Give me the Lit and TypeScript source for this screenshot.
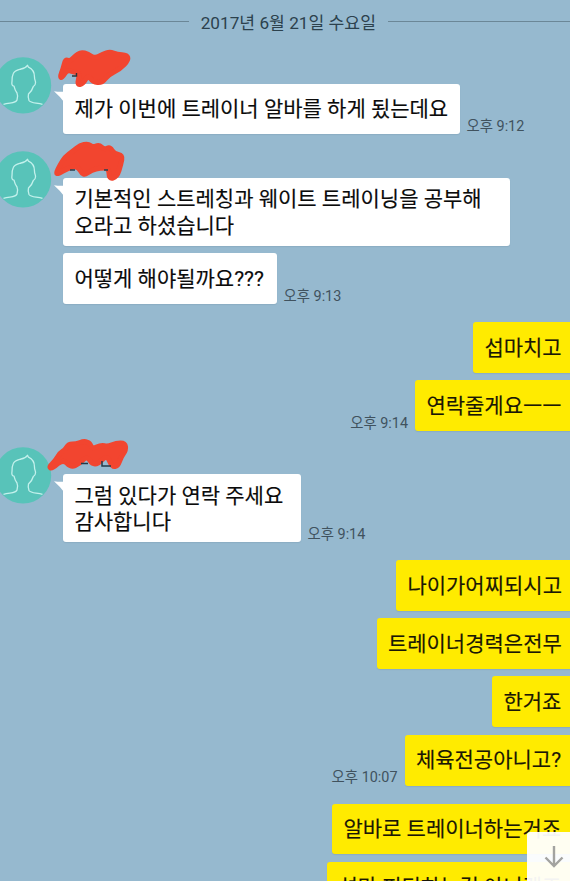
import { LitElement, html, svg, css } from "lit";
import { customElement, property } from "lit/decorators.js";

type Point = [number, number];

// Closed curve that runs through the midpoints of the outline's edges.
function smooth(points: Point[]): string {
  const mid = (a: Point, b: Point) => `${(a[0] + b[0]) / 2} ${(a[1] + b[1]) / 2}`;
  const last = points[points.length - 1];
  let d = `M${mid(last, points[0])}`;
  points.forEach((p, i) => {
    d += `Q${p[0]} ${p[1]} ${mid(p, points[(i + 1) % points.length])}`;
  });
  return d + "Z";
}

const SCRIBBLES: Point[][] = [
  [[60, 25], [63, 17], [65.5, 7], [70, 9.5], [75, 4], [81, 0], [88, 2], [95, 6.5], [103, 2], [110, -0.5], [117, 2.5], [127, 3], [128.5, 8], [120, 17], [108, 23], [102, 31], [93, 30], [88, 23], [83, 32], [77, 33], [80, 21], [73, 20], [67, 18], [62, 26]],
  [[56, 27], [60, 19], [65, 11], [73, 5], [80, -0.5], [88, -2.5], [93, 1.5], [99, -1.5], [104, 3.5], [110, 1], [114, 7.5], [122.5, 9.5], [121, 18], [117, 31], [109, 33], [109, 22], [100, 22], [92, 24], [83, 30], [78, 20], [68, 22], [58, 28]],
  [[49, 25], [55, 19], [60, 11], [65, 8], [68.5, 2], [76, 2], [84, -1], [90, 1], [92, 7], [101, 3], [108, 4.5], [116, 1], [125, 1], [126, 8], [121, 15], [118, 24], [112, 25], [107, 13], [98, 22], [92, 22], [87, 14], [79, 22], [71, 25.5], [63, 17], [52, 27]],
];

@customElement("contact-head")
class ContactHead extends LitElement {
  @property({ type: Number }) mark = 0;

  static styles = css`
    :host { display: block; position: absolute; left: 0; top: -32px; width: 140px; height: 70px; pointer-events: none; }
    svg { display: block; overflow: visible; }
    .ink { fill: #f2452f; stroke: #f2452f; stroke-width: 5; stroke-linejoin: round; }
  `;

  render() {
    const names = [
      svg`<path d="M72 24h4.500v-3" fill="none" stroke="#333" stroke-width="1.400"/>`,
      svg`<path d="M70 24h5M104 24h4" stroke="#274050" stroke-width="1.400"/>`,
      svg`<path d="M81 21.500h7M102 19v5h9" fill="none" stroke="#223a48" stroke-width="1.500"/>`,
    ];
    // Coordinates are relative to a point 32px above the first bubble.
    return html`<svg width="140" height="70" viewBox="0 0 140 70">
      <circle cx="23" cy="33.400" r="28.200" fill="#58c3b9"/>
      <path d="M3.500 52.300C10 50.500 16 51.500 17 48C17.800 45 18 43 17 41C15 38.500 14.500 36.500 14 34.200C12 34 11.500 32 12 29.500C12 26 12 24 13.300 21.500C15 18 18 17.800 21 17C24 16.500 26 15.500 27.500 13.300L28.500 15.200C32.500 17 34.500 21 34.500 25C34.300 28 36 29 35.500 31C35.300 33.500 34 34 33.300 34.500C32.500 38 30 40.500 28.500 42C28 44 28 46 29 48.500C31 51.500 37 50.500 42.500 52.300" fill="none" stroke="#c3f1ec" stroke-width="1.300" stroke-linejoin="round"/>
      <path d="M54 39.200Q59 40 64 39.700V50Q60 44.500 54 39.200Z" fill="#fff"/>
      <path d=${smooth(SCRIBBLES[this.mark])} class="ink"/>
      ${names[this.mark]}
    </svg>`;
  }
}

@customElement("chat-message")
class ChatMessage extends LitElement {
  @property({ type: Boolean, reflect: true }) mine = false;
  @property() time = "";
  @property({ attribute: false }) lines: string[] = [];
  @property({ type: Number }) wide = 0;

  static styles = css`
    :host { display: flex; align-items: flex-end; padding-left: 63px; gap: 6.500px; }
    :host([mine]) { flex-direction: row-reverse; padding-left: 0; gap: 7px; }
    .bubble {
      box-sizing: border-box; padding: 12.700px 11.400px 11.300px; border-radius: 3px; background: #fff;
      color: #0b0b0b; font-size: 21px; line-height: 27px; white-space: nowrap;
      -webkit-text-stroke: 0.150px currentColor;
      box-shadow: 0 1px 1px rgba(60, 90, 110, 0.12);
    }
    .bubble.two { padding: 8.300px 11.400px 6.200px; }
    .two .line { height: 26.800px; }
    :host([mine]) .bubble { background: #ffeb00; color: #1a1705; border-radius: 3px 0 0 3px; }
    .time { font-size: 14.400px; line-height: 17px; margin-bottom: -0.600px; color: #40525e; white-space: nowrap; }
  `;

  render() {
    const size = this.wide ? `width:${this.wide}px` : "";
    return html`
      <div class="bubble ${this.lines.length > 1 ? "two" : ""}" style=${size}>
        ${this.lines.map((l) => html`<div class="line">${l}</div>`)}
      </div>
      ${this.time ? html`<span class="time">${this.time}</span>` : ""}
    `;
  }
}

@customElement("app-root")
class AppRoot extends LitElement {
  static styles = css`
    :host {
      display: block; position: relative; height: 881px; overflow: hidden; background: #96b9cf;
      font-family: Roboto, "Noto Sans CJK KR", sans-serif;
    }
    .date { display: flex; align-items: center; gap: 12px; height: 42px; margin-bottom: 41.500px; font-size: 17.200px; color: #2c414d; white-space: nowrap; }
    .rule { flex: 1; height: 1px; background: #6b8797; }
    .rule.end { flex: 0 0 182px; }
    .chat { display: flex; flex-direction: column; gap: 17.700px; }
    .group { display: flex; flex-direction: column; gap: 7.200px; position: relative; }
    .group.named { margin-top: 25.500px; }
    .group.first { margin-top: 0; }
    .group.reply { margin-top: 0.300px; }
    .down {
      position: absolute; right: 0; bottom: 0; width: 43px; height: 49px; border-radius: 3px 0 0 0;
      background: rgba(255, 255, 255, 0.95); display: flex; align-items: center; justify-content: flex-end;
    }
    .down svg { margin-right: 5.500px; }
  `;

  render() {
    return html`
      <div class="date"><span class="rule"></span><span>2017년 6월 21일 수요일</span><span class="rule end"></span></div>
      <div class="chat">
        <div class="group named first">
          <contact-head .mark=${0}></contact-head>
          <chat-message .lines=${["제가 이번에 트레이너 알바를 하게 됬는데요"]} .wide=${397} time="오후 9:12"></chat-message>
        </div>
        <div class="group named">
          <contact-head .mark=${1}></contact-head>
          <chat-message .lines=${["기본적인 스트레칭과 웨이트 트레이닝을 공부해", "오라고 하셨습니다"]} .wide=${447.4}></chat-message>
          <chat-message .lines=${["어떻게 해야될까요???"]} .wide=${214} time="오후 9:13"></chat-message>
        </div>
        <div class="group reply">
          <chat-message mine .lines=${["섭마치고"]} .wide=${97}></chat-message>
          <chat-message mine .lines=${["연락줄게요ㅡㅡ"]} .wide=${155} time="오후 9:14"></chat-message>
        </div>
        <div class="group named">
          <contact-head .mark=${2}></contact-head>
          <chat-message .lines=${["그럼 있다가 연락 주세요", "감사합니다"]} .wide=${238} time="오후 9:14"></chat-message>
        </div>
        <div class="group">
          <chat-message mine .lines=${["나이가어찌되시고"]} .wide=${174}></chat-message>
          <chat-message mine .lines=${["트레이너경력은전무"]} .wide=${193.5}></chat-message>
          <chat-message mine .lines=${["한거죠"]} .wide=${78}></chat-message>
          <chat-message mine .lines=${["체육전공아니고?"]} .wide=${165.5} time="오후 10:07"></chat-message>
        </div>
        <div class="group reply">
          <chat-message mine .lines=${["알바로 트레이너하는거죠"]} .wide=${238}></chat-message>
          <chat-message mine .lines=${["설마 피티하는걸 아니겠죠"]} .wide=${243}></chat-message>
        </div>
      </div>
      <div class="down">
        <svg width="22" height="24" viewBox="0 0 22 24" fill="none" stroke="#a3a3a0" stroke-width="2.400"><path d="M11 1V21M2.500 12.500 11 21 19.500 12.500"/></svg>
      </div>
    `;
  }
}
